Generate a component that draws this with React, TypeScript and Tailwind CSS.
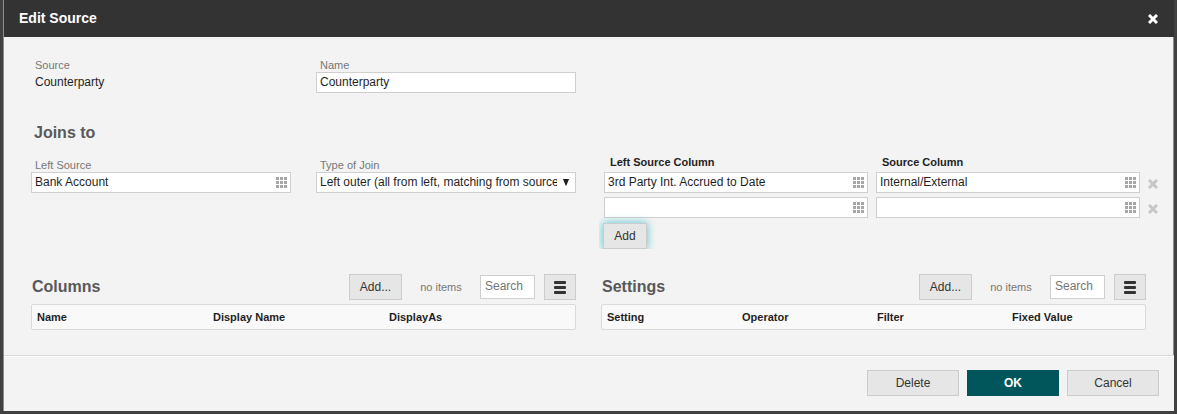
import React from "react";

const fieldBox = "flex h-[21px] items-center border border-[#cfcfcf] bg-white";
const fieldText =
  "h-full w-full min-w-0 flex-1 bg-transparent pb-px pl-[3px] text-[12px] text-[#1f1f1f] outline-none placeholder:text-[#757575]";
const button =
  "h-[26px] border border-[#cccccc] bg-[#e6e6e6] text-[12px] leading-[24px] text-[#333333]";

function PickerIcon() {
  return (
    <svg width="11" height="11" viewBox="0 0 11 11" fill="#a6a6a6" shapeRendering="crispEdges" aria-hidden="true">
      {[0, 4, 8].map((y) => [0, 4, 8].map((x) => <rect key={`${x}-${y}`} x={x} y={y} width="3" height="3" />))}
    </svg>
  );
}

function CrossIcon() {
  return (
    <svg width="10" height="10" viewBox="0 0 10 10" stroke="currentColor" strokeWidth="3" aria-hidden="true">
      <path d="M1 1 L9 9 M9 1 L1 9" />
    </svg>
  );
}

function MenuIcon() {
  return (
    <svg width="12" height="13" viewBox="0 0 12 13" fill="#333333" aria-hidden="true">
      <rect y="0" width="12" height="3" rx="1" />
      <rect y="5" width="12" height="3" rx="1" />
      <rect y="10" width="12" height="3" rx="1" />
    </svg>
  );
}

function Label({ htmlFor, children }: { htmlFor: string; children: React.ReactNode }) {
  return (
    <label htmlFor={htmlFor} className="block pl-1 text-[11px] leading-[14px] text-[#777777]">
      {children}
    </label>
  );
}

function PickerField({ id, label, value }: { id?: string; label?: string; value: string }) {
  return (
    <div className={`${fieldBox} min-w-0 flex-1 pr-[3px]`}>
      <input id={id} aria-label={label} defaultValue={value} className={fieldText} />
      <button type="button" aria-label="Choose" className="pb-px">
        <PickerIcon />
      </button>
    </div>
  );
}

function JoinRow({ left, right }: { left: string; right: string }) {
  return (
    <div className="flex items-center gap-2">
      <PickerField label="Left Source Column" value={left} />
      <PickerField label="Source Column" value={right} />
      <button type="button" aria-label="Remove join" className="pt-0.5 text-[#c6c6c6]">
        <CrossIcon />
      </button>
    </div>
  );
}

function ListPanel({ title, headers }: { title: string; headers: { text: string; width: string }[] }) {
  return (
    <section>
      <div className="flex items-center">
        <h2 className="flex-1 pl-px text-[16px] font-bold leading-5 text-[#595959]">{title}</h2>
        <button type="button" className={`${button} w-[53px]`}>Add...</button>
        <span className="w-[78px] text-center text-[11px] text-[#777777]">no items</span>
        <input
          aria-label={`Search ${title}`}
          placeholder="Search"
          className="h-6 w-[55px] border border-[#cfcfcf] bg-white pb-0.5 pl-1 text-[12px] outline-none placeholder:text-[#757575]"
        />
        <button type="button" aria-label="Menu" className={`${button} ml-[9px] flex w-8 items-center justify-center`}>
          <MenuIcon />
        </button>
      </div>
      <table className="mt-1 w-full table-fixed border-separate border-spacing-0 rounded-[2px] border border-[#dadada] bg-[#f9f9f9] text-left text-[11px] leading-[14px] text-[#1f1f1f]">
        <thead>
          <tr>
            {headers.map((h) => (
              <th key={h.text} scope="col" className={`${h.width} py-[5px] pl-[5px] font-bold`}>
                {h.text}
              </th>
            ))}
          </tr>
        </thead>
      </table>
    </section>
  );
}

export default function App() {
  return (
    <div className="flex min-h-screen flex-col bg-[#414141] pb-[3px] pl-[3px] pr-[3px] font-['Liberation_Sans',Arial,sans-serif]">
      <main className="flex grow flex-col border-l border-[#8c8c8c] bg-[#f3f3f3]">
        <header className="flex h-[37px] items-center justify-between bg-[#333333] pl-[15px] pr-4 text-white">
          <h1 className="text-[14px] font-bold">Edit Source</h1>
          <button type="button" aria-label="Close">
            <CrossIcon />
          </button>
        </header>

        <div className="grow border-r border-[#8c8c8c] px-[27px] pb-[25px] pt-[21px]">
          <div className="grid grid-cols-2 gap-x-[25px]">
            <div className="grid grid-cols-2 gap-x-[25px]">
              <div>
                <p className="pl-1 text-[11px] leading-[14px] text-[#777777]">Source</p>
                <p className="pl-1 text-[12px] leading-5 text-[#1f1f1f]">Counterparty</p>
              </div>
              <div>
                <Label htmlFor="name">Name</Label>
                <div className={fieldBox}>
                  <input id="name" defaultValue="Counterparty" className={fieldText} />
                </div>
              </div>
            </div>
          </div>

          <h2 className="mt-[30px] pl-[3px] text-[16px] font-bold leading-5 text-[#595959]">Joins to</h2>

          <div className="mt-3 grid grid-cols-2 gap-x-[25px]">
            <div className="grid grid-cols-2 gap-x-[25px] pt-[3px]">
              <div>
                <Label htmlFor="left-source">Left Source</Label>
                <PickerField id="left-source" value="Bank Account" />
              </div>
              <div>
                <Label htmlFor="join-type">Type of Join</Label>
                <div className={`${fieldBox} relative`}>
                  <select id="join-type" className={`${fieldText} appearance-none pr-[18px]`}>
                    <option>Left outer (all from left, matching from source)</option>
                  </select>
                  <svg
                    className="pointer-events-none absolute right-[6px]"
                    width="6"
                    height="7"
                    viewBox="0 0 6 7"
                    fill="#1f1f1f"
                    aria-hidden="true"
                  >
                    <path d="M0 0 H6 L3.4 6.5 H2.6 Z" />
                  </svg>
                </div>
              </div>
            </div>
            <div className="-ml-0.5 -mr-3 overflow-hidden">
              <div className="flex gap-2 pl-[5px] pr-[18px] text-[11px] font-bold leading-[14px] text-[#1f1f1f]">
                <span className="flex-1 pl-[6px]">Left Source Column</span>
                <span className="flex-1 pl-[6px]">Source Column</span>
              </div>
              <div className="flex flex-col gap-1 pl-[5px] pt-[3px]">
                <JoinRow left="3rd Party Int. Accrued to Date" right="Internal/External" />
                <JoinRow left="" right="" />
              </div>
              <div className="flex pl-1 pt-[5px]">
                <button type="button" className={`${button} w-11 shadow-[0_0_8px_#4fc3d0]`}>Add</button>
              </div>
            </div>
          </div>

          <div className="mt-[25px] grid grid-cols-2 gap-x-[25px]">
            <ListPanel
              title="Columns"
              headers={[
                { text: "Name", width: "w-[176px]" },
                { text: "Display Name", width: "w-[176px]" },
                { text: "DisplayAs", width: "w-auto" },
              ]}
            />
            <ListPanel
              title="Settings"
              headers={[
                { text: "Setting", width: "w-[135px]" },
                { text: "Operator", width: "w-[135px]" },
                { text: "Filter", width: "w-[135px]" },
                { text: "Fixed Value", width: "w-auto" },
              ]}
            />
          </div>
        </div>

        <footer className="border-t border-[#d9d9d9]">
          <div className="flex justify-end gap-2 border-t border-white pb-[15px] pr-[15px] pt-[13px]">
            <button type="button" className={`${button} w-[92px]`}>Delete</button>
            <button type="button" className="h-[26px] w-[92px] bg-[#00565b] text-[12px] font-bold text-white">OK</button>
            <button type="button" className={`${button} w-[92px]`}>Cancel</button>
          </div>
        </footer>
      </main>
    </div>
  );
}
